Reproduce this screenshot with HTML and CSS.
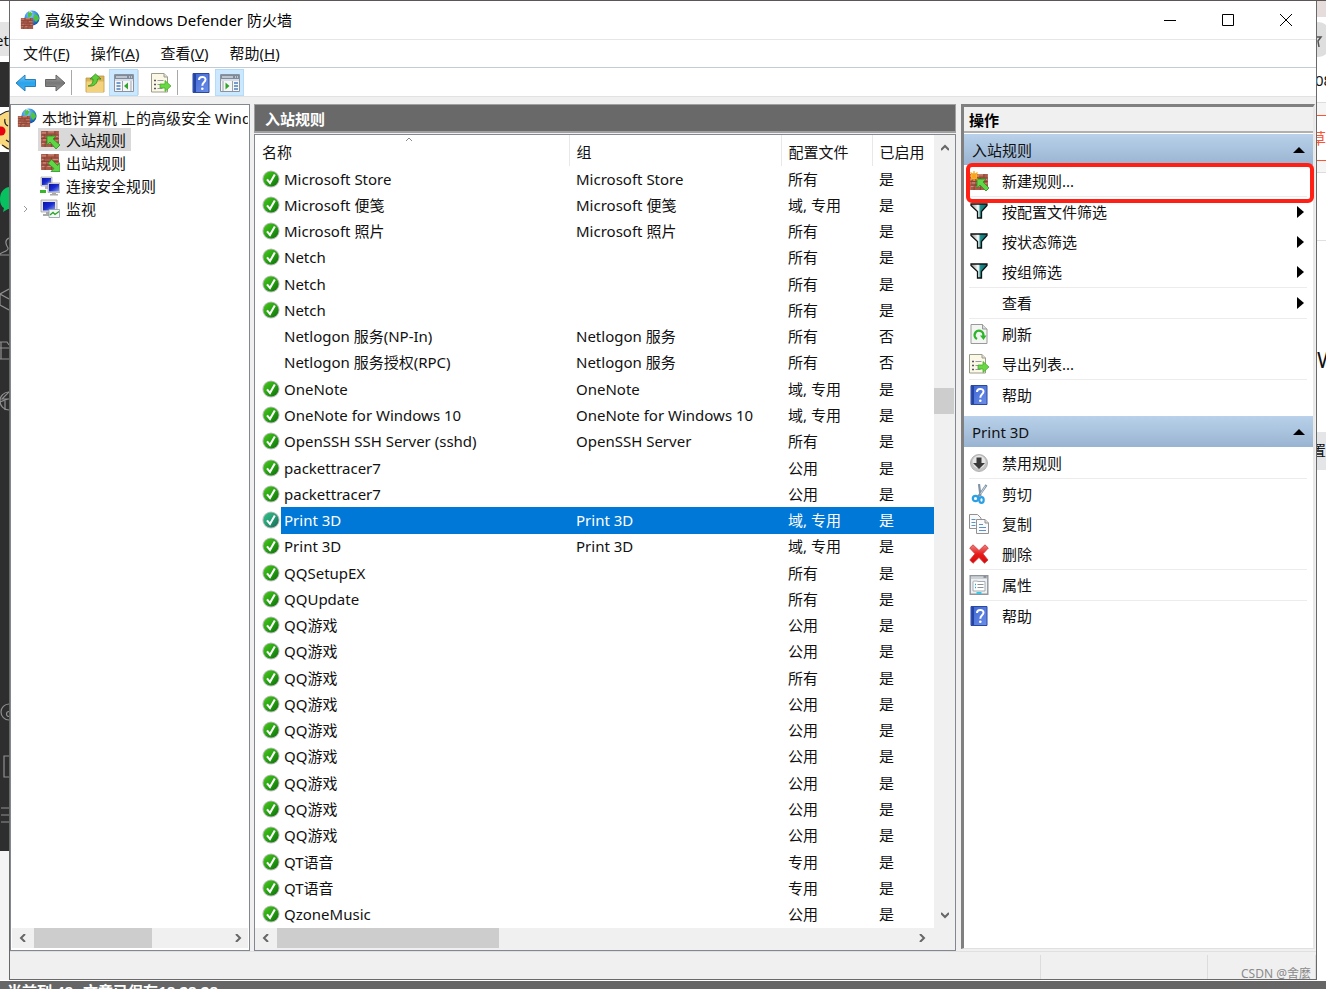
FILE: index.html
```html
<!DOCTYPE html>
<html lang="zh-CN">
<head>
<meta charset="utf-8">
<title>高级安全 Windows Defender 防火墙</title>
<link rel="stylesheet" href="styles.css">
</head>
<body>
<svg class="sprite" width="0" height="0" aria-hidden="true">
  <defs>
    <linearGradient id="g-green" x1="0" y1="0" x2="1" y2="1"><stop offset="0" stop-color="#4cc81c"/><stop offset=".5" stop-color="#26a312"/><stop offset="1" stop-color="#0f6a0a"/></linearGradient>
    <linearGradient id="g-blue" x1="0" y1="0" x2="0" y2="1"><stop offset="0" stop-color="#6fcbf8"/><stop offset=".5" stop-color="#2ba3ec"/><stop offset="1" stop-color="#3fb4f4"/></linearGradient>
    <linearGradient id="g-gray" x1="0" y1="0" x2="0" y2="1"><stop offset="0" stop-color="#a8a8a8"/><stop offset=".5" stop-color="#777"/><stop offset="1" stop-color="#999"/></linearGradient>
    <linearGradient id="g-help" x1="0" y1="0" x2="1" y2="1"><stop offset="0" stop-color="#3f66d4"/><stop offset="1" stop-color="#6a8ee8"/></linearGradient>
    <linearGradient id="g-red" x1="0" y1="0" x2="0" y2="1"><stop offset="0" stop-color="#f08080"/><stop offset=".5" stop-color="#e81c1c"/><stop offset="1" stop-color="#d80808"/></linearGradient>
    <linearGradient id="g-screen" x1="0" y1="0" x2="1" y2="1"><stop offset="0" stop-color="#0a12a8"/><stop offset=".5" stop-color="#1a2cd0"/><stop offset="1" stop-color="#8aa4f4"/></linearGradient>
    <linearGradient id="g-funnel" x1="0" y1="0" x2="1" y2="0"><stop offset="0" stop-color="#888"/><stop offset=".45" stop-color="#fff"/><stop offset=".6" stop-color="#1a8c8c"/><stop offset="1" stop-color="#0b6d70"/></linearGradient>
    <radialGradient id="g-globe" cx=".4" cy=".3" r=".8"><stop offset="0" stop-color="#8fd0ff"/><stop offset=".6" stop-color="#2a7fd4"/><stop offset="1" stop-color="#0e3f9a"/></radialGradient>
  </defs>
  <symbol id="i-check" viewBox="0 0 18 18"><circle cx="9" cy="9" r="8.6" fill="#bdbdbd"/><circle cx="9" cy="9" r="7.6" fill="url(#g-green)"/><path d="M5 9.4 8 13 12.8 4.6" fill="none" stroke="#fff" stroke-width="2.1"/></symbol>
  <symbol id="i-bricks" viewBox="0 0 20 18"><path fill="#ac5a48" d="M0 0h20v18H0z"/><path d="M1 2h5M8 1h7M13 6h6M1 6h3M2 10h6M1 14h4M7 14h5M14 11h5" stroke="#d08c7c" stroke-width="1.4"/><path d="M0 4.500h20M0 8.500h20M0 12.500h20M6.500 0v4M15.500 0v4M3.500 4v4M11.500 4v4M6.500 9v4M14.500 9v4M4.500 13v5M11.500 13v5" stroke="#7c3c30" stroke-width=".9" fill="none"/></symbol>
  <symbol id="i-in" viewBox="0 0 20 18"><use href="#i-bricks" width="20" height="16"/><path d="M7 5h9l-3 3 7 6-4 4-6-7-3 3z" fill="#5fd646" stroke="#2f8f22" stroke-width=".8"/></symbol>
  <symbol id="i-out" viewBox="0 0 20 18"><use href="#i-bricks" width="20" height="16"/><path d="M20 17.500h-9l3-3-6-5 3.500-4 6 6 2.500-3z" fill="#5fd646" stroke="#2f8f22" stroke-width=".8"/></symbol>
  <symbol id="i-new" viewBox="0 0 20 20"><use href="#i-bricks" y="3" width="20" height="16"/><path d="M8 8h9l-3 3 6 6-3 3-6-6-3 3z" fill="#5fd646" stroke="#2f8f22" stroke-width=".8"/><circle cx="5" cy="5" r="3.200" fill="#ffc43a"/><path d="M5 0v10M0 5h10M1.500 1.500l7 7M8.500 1.500l-7 7" stroke="#f7a41c" stroke-width="1.200"/></symbol>
  <symbol id="i-fw" viewBox="0 0 20 20"><circle cx="12" cy="8" r="7.600" fill="url(#g-globe)"/><path d="M8 3c3-3 5 0 4 2s-3 3-4 2zM14 5c3-2 5 2 5 4l-3 3c-2-2-3-4-2-7z" fill="#4ec53c"/><path d="M9 2c2-1 3 0 3 1" stroke="#e8f6ff" fill="none"/><use href="#i-bricks" y="8" width="14" height="11"/></symbol>
  <symbol id="i-pcs" viewBox="0 0 20 20"><path d="M1 1h11v9H1z" fill="#dcdcdc" stroke="#999" stroke-width=".6"/><path d="M2 2h9v7H2z" fill="url(#g-screen)"/><path d="M5 10h4v3H5z" fill="#bbb"/><path d="M0 14h6v3H0z" fill="#39b52a"/><path d="M8 7h12v9.500H8z" fill="#dcdcdc" stroke="#999" stroke-width=".6"/><path d="M9 8h10v7.500H9z" fill="url(#g-screen)"/><path d="M12 17h4v1h2v1.500h-8V18h2z" fill="#aaa"/></symbol>
  <symbol id="i-mon" viewBox="0 0 20 20"><path d="M1 1h16v12H1z" fill="#e4e4e4" stroke="#999" stroke-width=".7"/><path d="M3 3h12v8.500H3z" fill="url(#g-screen)"/><path d="M6 13h5v2h3v2H3v-2h3z" fill="#aaa"/><path d="M9 10.500h10.500v8H9z" fill="#f4f9f4" stroke="#8a9aa8" stroke-width=".8"/><path d="m10 16 3-2.500 2 2 4-3" stroke="#28a428" fill="none" stroke-width="1.300"/></symbol>
  <symbol id="i-back" viewBox="0 0 22 18"><path d="M1 9 10 1v4.500h10.500v7H10V17z" fill="url(#g-blue)" stroke="#2b7fb8"/></symbol>
  <symbol id="i-fwd" viewBox="0 0 22 18"><path d="M21 9 12 1v4.500H1.500v7H12V17z" fill="url(#g-gray)" stroke="#666"/></symbol>
  <symbol id="i-folder" viewBox="0 0 20 20"><path d="M1 5h9l2-2h7v16H1z" fill="#dcb45c" stroke="#bb9440" stroke-width=".8"/><path d="M1.500 8.500h17V19h-17z" fill="#f2d27c"/><path d="M3 13c4-1 5-3 5-7H5l5.500-5L16 6h-3.500c0 4-3 8-9.500 7z" fill="#5fce3a" stroke="#2c8a1c" stroke-width=".8"/></symbol>
  <symbol id="i-paneL" viewBox="0 0 20 18"><path d="M.5.500h19v17H.5z" fill="#f6f6f6" stroke="#8993a0"/><path d="M1 1h18v4H1z" fill="#7d8b9d"/><path d="M2 3h11M15 3h1M17 3h1" stroke="#fff"/><path d="M1 5h18v2H1z" fill="#d6dde6"/><path d="M2.500 9h4M2.500 12h4M2.500 15h4" stroke="#4c7fc0" stroke-width="1.500"/><path d="M8.500 7v10M17 7v10" stroke="#9aa3ae"/><path d="m10 12 4-3.500v7z" fill="#2fa52b"/></symbol>
  <symbol id="i-paneR" viewBox="0 0 20 18"><path d="M.5.500h19v17H.5z" fill="#f6f6f6" stroke="#8993a0"/><path d="M1 1h18v4H1z" fill="#7d8b9d"/><path d="M2 3h11M15 3h1M17 3h1" stroke="#fff"/><path d="M1 5h18v2H1z" fill="#d6dde6"/><path d="M14 9h4M14 12h4M14 15h4" stroke="#4c7fc0" stroke-width="1.500"/><path d="M12.500 7v10M3 7v10" stroke="#9aa3ae"/><path d="m9.500 12-4-3.500v7z" fill="#2fa52b"/></symbol>
  <symbol id="i-export" viewBox="0 0 20 20"><path d="M.500.500H13l3.500 3.500v15H.500z" fill="#fbf8e6" stroke="#9c9c8c"/><path d="M13 .500V4h3.500" fill="#ddd" stroke="#9c9c8c"/><path d="M3 7.500h2M3 11.500h2M3 15.500h2" stroke="#556" stroke-width="1.500"/><path d="M6.500 7.500h6M6.500 11.500h5M6.500 15.500h5" stroke="#99a" stroke-width="1.200"/><path d="M9 11h5V7.500l6 5.500-6 5.500V15H9z" fill="#69d844" stroke="#3da824" stroke-width=".7"/></symbol>
  <symbol id="i-help" viewBox="0 0 17 20"><path d="M.500.500h16v19H.500z" fill="url(#g-help)" stroke="#2b48a0"/><path d="M1 1h2.500v18H1z" fill="#2444a4"/><path d="M6.500 7c0-4 6.500-4 6.500-.5 0 3-3.200 2.500-3.200 6.200" fill="none" stroke="#fff" stroke-width="2"/><circle cx="9.800" cy="15.800" r="1.300" fill="#fff"/></symbol>
  <symbol id="i-filter" viewBox="-1 0 20 18"><path d="M1 1h16v1.500L11.500 8.500V15h-4V8.500L1 2.500z" fill="url(#g-funnel)" stroke="#111" stroke-width="1.300"/></symbol>
  <symbol id="i-refresh" viewBox="0 0 17 20"><path d="M.500.500H12L16.500 5v14.500H.500z" fill="#f3f5f3" stroke="#999"/><path d="M12 .500V5h4.500" fill="#ddd" stroke="#999"/><path d="M6.500 15A4.400 4.400 0 1 1 12.800 12" fill="none" stroke="#2fb52b" stroke-width="2.400"/><path d="M9.500 11.500H16L13 16z" fill="#2fb52b"/></symbol>
  <symbol id="i-disable" viewBox="-1 -1 20 20"><circle cx="9" cy="9" r="8.500" fill="#c4c4c4" stroke="#a6a6a6" stroke-width=".8"/><circle cx="9" cy="8" r="6.500" fill="#e6e6e6"/><path d="M6.500 3.500h5V9h3.500l-6 6-6-6h3.500z" fill="#3a3a3a"/></symbol>
  <symbol id="i-cut" viewBox="0 0 16 20"><path d="m8 0 1.500 12M15.500 1 7 13" stroke="#7f92a6" stroke-width="2.200"/><path d="m14.500 2-5 8" stroke="#dce6ee" stroke-width=".8"/><circle cx="4.500" cy="14.500" r="2.700" fill="none" stroke="#2d9fe4" stroke-width="2.200"/><ellipse cx="10.500" cy="16" rx="2.200" ry="2.800" fill="none" stroke="#2d9fe4" stroke-width="2.200"/></symbol>
  <symbol id="i-copy" viewBox="0 0 20 20"><path d="M.500.500h8L12 4v10.500H.500z" fill="#fafafa" stroke="#929292"/><path d="M2.500 5.500h4M2.500 8.500h4M2.500 11.500h4" stroke="#5b93c8" stroke-width="1.200"/><path d="M7.500 5.500H16L19.500 9v10.500h-12z" fill="#fafafa" stroke="#929292"/><path d="M16 5.500V9h3.500" fill="#ddd" stroke="#929292"/><path d="M10 10.500h4M10 13.500h7M10 16.500h7" stroke="#5b93c8" stroke-width="1.200"/></symbol>
  <symbol id="i-delete" viewBox="0 0 20 20"><path d="M4 .800 10 6.500 16 .800 19.300 4 14 9.800 19 16 15.500 19.300 10 13.500 4 19.300.800 16 6 9.800.700 4z" fill="url(#g-red)" stroke="#c43a3a" stroke-width=".8"/></symbol>
  <symbol id="i-props" viewBox="0 0 19 20"><path d="M.700.700h17.600v18.600H.700z" fill="#eef0f2" stroke="#8e959c" stroke-width="1.400"/><path d="M1 3h17" stroke="#aab2ba"/><path d="M14 2h3" stroke="#556" stroke-width="1"/><path d="M3.500 6.500h12v9.500h-12z" fill="#fff" stroke="#a4abb3"/><path d="M4 5h4v2H4z" fill="#ccd2d8"/><path d="M5.500 9.500h1M5.500 12.500h1" stroke="#2aa4e0" stroke-width="1.500"/><path d="M8 9.500h6M8 12.500h6" stroke="#8a939c"/><path d="M7 17h5v2H7z" fill="#3ac8ea"/></symbol>
</svg>

<div class="desktop">
  <div class="edge-top"></div>
  <div class="edge-left">
    <div class="tab-piece">et</div>
    <div class="dark-a"></div>
    <svg class="avatar" viewBox="0 0 9 45"><path fill="#fff" d="M0 0h9v45H0z"/><path d="M9 4C4 4 2 8 0 9v28c3 2 5 5 9 6z" fill="#f9d77c"/><path d="M9 4C5 4 2 7 0 8M5 12c-1 4 1 6 3 7M2 38c3 1 4 4 7 4M6 33l3 2" fill="none" stroke="#222" stroke-width="1.200"/><circle cx="1" cy="24" r="4.500" fill="#e60012"/></svg>
    <svg class="dock" viewBox="0 0 9 699"><path fill="#2e2e2e" d="M0 0h9v699H0z"/><path d="M9 35C3 36 0 41 0 47c0 5 2 8 4 9l-1 4 5-3h1z" fill="#07c160"/><g fill="none" stroke="#8f8f8f" stroke-width="1.200"><path d="M9 86c-5 2-3 7-1 10 1 3-6 4-8 6M0 103h9M9 137l-9 5v11l9 5M0 142l9 5M0 190h7l2 3M0 196h9M0 207h9M1 190v17"/><circle cx="9" cy="249" r="9"/><path d="M9 240 2 247h7M0 250l8-3M5 258v-9"/><circle cx="9" cy="560" r="8"/><circle cx="9" cy="562" r="2.500"/><path d="M9 604H4v21h5M1 656h8M1 663h8M1 670h8"/></g></svg>
    <div class="pale"></div>
  </div>

  <main class="window">
    <header class="titlebar">
      <svg class="app-icon"><use href="#i-fw"/></svg>
      <h1>高级安全 Windows Defender 防火墙</h1>
      <button class="cap" aria-label="最小化"><svg viewBox="0 0 12 12"><path d="M0 6.500h12"/></svg></button>
      <button class="cap" aria-label="最大化"><svg viewBox="0 0 12 12"><path d="M.500.500h11v11H.500z"/></svg></button>
      <button class="cap" aria-label="关闭"><svg viewBox="0 0 12 12"><path d="m0 0 12 12M12 0 0 12"/></svg></button>
    </header>
    <nav class="menubar">
      <button>文件(<u>F</u>)</button><button>操作(<u>A</u>)</button><button>查看(<u>V</u>)</button><button>帮助(<u>H</u>)</button>
    </nav>
    <div class="toolbar">
      <button aria-label="后退"><svg class="arrow"><use href="#i-back"/></svg></button>
      <button aria-label="前进"><svg class="arrow"><use href="#i-fwd"/></svg></button>
      <i class="sep first"></i>
      <button aria-label="向上"><svg><use href="#i-folder"/></svg></button>
      <button class="on" aria-label="显示控制台树"><svg><use href="#i-paneL"/></svg></button>
      <i class="sep faint"></i>
      <button aria-label="导出列表"><svg><use href="#i-export"/></svg></button>
      <i class="sep last"></i>
      <button aria-label="帮助"><svg><use href="#i-help"/></svg></button>
      <button class="on" aria-label="显示操作窗格"><svg><use href="#i-paneR"/></svg></button>
    </div>

    <div class="panes">
      <section class="tree-pane">
        <ul class="tree">
          <li class="root"><svg><use href="#i-fw"/></svg><span>本地计算机 上的高级安全 Windows Defender 防火墙</span></li>
          <li><i class="exp"></i><span class="node sel"><svg><use href="#i-in"/></svg>入站规则</span></li>
          <li><i class="exp"></i><span class="node"><svg><use href="#i-out"/></svg>出站规则</span></li>
          <li><i class="exp"></i><span class="node"><svg><use href="#i-pcs"/></svg>连接安全规则</span></li>
          <li><i class="exp"><svg viewBox="0 0 6 8"><path d="m1 1 3 3-3 3"/></svg></i><span class="node"><svg><use href="#i-mon"/></svg>监视</span></li>
        </ul>
        <div class="hbar tree-bar">
          <button aria-label="向左"><svg viewBox="0 0 8 8"><path d="M6 0 2 4l4 4"/></svg></button>
          <div class="track"><div class="thumb"></div></div>
          <button aria-label="向右"><svg viewBox="0 0 8 8"><path d="m2 0 4 4-4 4"/></svg></button>
        </div>
      </section>

      <section class="list-pane">
        <h2>入站规则</h2>
        <div class="list-box">
          <div class="list-area">
            <table>
              <colgroup><col class="c-name"><col class="c-group"><col class="c-prof"><col></colgroup>
              <thead><tr><th class="sorted">名称<svg viewBox="0 0 8 5"><path d="m1 4 3-3 3 3"/></svg></th><th>组</th><th>配置文件</th><th>已启用</th></tr></thead>
              <tbody>
                <tr><td><span><svg><use href="#i-check"/></svg>Microsoft Store</span></td><td>Microsoft Store</td><td>所有</td><td>是</td></tr>
                <tr><td><span><svg><use href="#i-check"/></svg>Microsoft 便笺</span></td><td>Microsoft 便笺</td><td>域, 专用</td><td>是</td></tr>
                <tr><td><span><svg><use href="#i-check"/></svg>Microsoft 照片</span></td><td>Microsoft 照片</td><td>所有</td><td>是</td></tr>
                <tr><td><span><svg><use href="#i-check"/></svg>Netch</span></td><td></td><td>所有</td><td>是</td></tr>
                <tr><td><span><svg><use href="#i-check"/></svg>Netch</span></td><td></td><td>所有</td><td>是</td></tr>
                <tr><td><span><svg><use href="#i-check"/></svg>Netch</span></td><td></td><td>所有</td><td>是</td></tr>
                <tr><td><span><svg></svg>Netlogon 服务(NP-In)</span></td><td>Netlogon 服务</td><td>所有</td><td>否</td></tr>
                <tr><td><span><svg></svg>Netlogon 服务授权(RPC)</span></td><td>Netlogon 服务</td><td>所有</td><td>否</td></tr>
                <tr><td><span><svg><use href="#i-check"/></svg>OneNote</span></td><td>OneNote</td><td>域, 专用</td><td>是</td></tr>
                <tr><td><span><svg><use href="#i-check"/></svg>OneNote for Windows 10</span></td><td>OneNote for Windows 10</td><td>域, 专用</td><td>是</td></tr>
                <tr><td><span><svg><use href="#i-check"/></svg>OpenSSH SSH Server (sshd)</span></td><td>OpenSSH Server</td><td>所有</td><td>是</td></tr>
                <tr><td><span><svg><use href="#i-check"/></svg>packettracer7</span></td><td></td><td>公用</td><td>是</td></tr>
                <tr><td><span><svg><use href="#i-check"/></svg>packettracer7</span></td><td></td><td>公用</td><td>是</td></tr>
                <tr class="sel"><td><span><svg><use href="#i-check"/></svg>Print 3D</span></td><td>Print 3D</td><td>域, 专用</td><td>是</td></tr>
                <tr><td><span><svg><use href="#i-check"/></svg>Print 3D</span></td><td>Print 3D</td><td>域, 专用</td><td>是</td></tr>
                <tr><td><span><svg><use href="#i-check"/></svg>QQSetupEX</span></td><td></td><td>所有</td><td>是</td></tr>
                <tr><td><span><svg><use href="#i-check"/></svg>QQUpdate</span></td><td></td><td>所有</td><td>是</td></tr>
                <tr><td><span><svg><use href="#i-check"/></svg>QQ游戏</span></td><td></td><td>公用</td><td>是</td></tr>
                <tr><td><span><svg><use href="#i-check"/></svg>QQ游戏</span></td><td></td><td>公用</td><td>是</td></tr>
                <tr><td><span><svg><use href="#i-check"/></svg>QQ游戏</span></td><td></td><td>所有</td><td>是</td></tr>
                <tr><td><span><svg><use href="#i-check"/></svg>QQ游戏</span></td><td></td><td>公用</td><td>是</td></tr>
                <tr><td><span><svg><use href="#i-check"/></svg>QQ游戏</span></td><td></td><td>公用</td><td>是</td></tr>
                <tr><td><span><svg><use href="#i-check"/></svg>QQ游戏</span></td><td></td><td>公用</td><td>是</td></tr>
                <tr><td><span><svg><use href="#i-check"/></svg>QQ游戏</span></td><td></td><td>公用</td><td>是</td></tr>
                <tr><td><span><svg><use href="#i-check"/></svg>QQ游戏</span></td><td></td><td>公用</td><td>是</td></tr>
                <tr><td><span><svg><use href="#i-check"/></svg>QQ游戏</span></td><td></td><td>公用</td><td>是</td></tr>
                <tr><td><span><svg><use href="#i-check"/></svg>QT语音</span></td><td></td><td>专用</td><td>是</td></tr>
                <tr><td><span><svg><use href="#i-check"/></svg>QT语音</span></td><td></td><td>专用</td><td>是</td></tr>
                <tr><td><span><svg><use href="#i-check"/></svg>QzoneMusic</span></td><td></td><td>公用</td><td>是</td></tr>
              </tbody>
            </table>
            <div class="vbar">
              <button aria-label="向上滚动"><svg viewBox="0 0 8 8"><path d="m0 6 4-4 4 4"/></svg></button>
              <div class="track"><div class="thumb"></div></div>
              <button aria-label="向下滚动"><svg viewBox="0 0 8 8"><path d="m0 2 4 4 4-4"/></svg></button>
            </div>
          </div>
          <div class="hbar list-bar">
            <button aria-label="向左"><svg viewBox="0 0 8 8"><path d="M6 0 2 4l4 4"/></svg></button>
            <div class="track"><div class="thumb"></div></div>
            <button aria-label="向右"><svg viewBox="0 0 8 8"><path d="m2 0 4 4-4 4"/></svg></button>
          </div>
        </div>
      </section>

      <aside class="actions">
        <h2>操作</h2>
        <h3>入站规则<svg viewBox="0 0 12 6"><path d="M6 0l6 6H0z"/></svg></h3>
        <ul>
          <li class="line marked"><button><svg><use href="#i-new"/></svg>新建规则...</button></li>
          <li><button><svg><use href="#i-filter"/></svg>按配置文件筛选<b></b></button></li>
          <li><button><svg><use href="#i-filter"/></svg>按状态筛选<b></b></button></li>
          <li class="line"><button><svg><use href="#i-filter"/></svg>按组筛选<b></b></button></li>
          <li class="line"><button><svg></svg>查看<b></b></button></li>
          <li><button><svg><use href="#i-refresh"/></svg>刷新</button></li>
          <li class="line"><button><svg><use href="#i-export"/></svg>导出列表...</button></li>
          <li><button><svg><use href="#i-help"/></svg>帮助</button></li>
        </ul>
        <h3>Print 3D<svg viewBox="0 0 12 6"><path d="M6 0l6 6H0z"/></svg></h3>
        <ul>
          <li class="line"><button><svg><use href="#i-disable"/></svg>禁用规则</button></li>
          <li><button><svg><use href="#i-cut"/></svg>剪切</button></li>
          <li><button><svg><use href="#i-copy"/></svg>复制</button></li>
          <li class="line"><button><svg><use href="#i-delete"/></svg>删除</button></li>
          <li class="line"><button><svg><use href="#i-props"/></svg>属性</button></li>
          <li><button><svg><use href="#i-help"/></svg>帮助</button></li>
        </ul>
      </aside>
    </div>
    <footer class="status"><span></span><span></span><span></span></footer>
  </main>

  <div class="edge-right">
    <div class="rose"></div>
    <svg class="round" viewBox="0 0 9 44"><path fill="#fff" d="M0 0h9v44H0z"/><path d="M0 5c4 0 7 1 9 3v29c-2 2-5 3-9 3z" fill="#dedede"/><path d="M0 20h4l-3 4 1 6" stroke="#555" fill="none" stroke-width="1.500"/></svg>
    <div class="num">08</div>
    <div class="orange"><span>草</span></div>
    <div class="blank"></div>
    <div class="letter">W</div>
    <div class="chip">置</div>
  </div>
  <div class="edge-bottom"><span>当前列 48</span><span>文章已保存18:28:28</span></div>
  <div class="watermark">CSDN @舍麼</div>
</div>
</body>
</html>
```
FILE: styles.css
```css
* { box-sizing: border-box; }
body { margin: 0; font: 15px/20px "Noto Sans", "Noto Sans CJK SC", sans-serif; color: #111; }
h1, h2, h3, ul { margin: 0; padding: 0; font-weight: 400; list-style: none; }
button { border: 0; padding: 0; background: none; font: inherit; color: inherit; }
.sprite { position: absolute; }

.desktop {
  position: relative;
  display: grid;
  grid-template: 1px minmax(0, 1fr) 9px / 9px minmax(0, 1fr) 9px;
  height: 100vh;
  overflow: hidden;
  background: #fff;
}
.edge-top { grid-column: 1 / -1; background: #5c5654; }
.edge-left, .edge-right { display: flex; flex-direction: column; overflow: hidden; }
.edge-left svg, .edge-right svg { display: block; flex: none; width: 9px; }
.tab-piece { height: 61px; padding-top: 29px; background: linear-gradient(#fff 21px, #e4e4e4 21px 55px, #fff 55px); direction: rtl; }
.dark-a { height: 45px; background: #2e2e2e; }
.avatar { height: 45px; }
.dock { height: 699px; }
.pale { flex: 1; background: #f4f4f4; }
.rose { height: 16px; background: #e6dcdb; }
.round { height: 44px; }
.num { height: 42px; padding-top: 9px; border-bottom: 1px solid #ddd; text-indent: -2px; }
.orange { height: 70px; padding-top: 12px; background: #f5f5f5; border-bottom: 1px solid #ddd; color: #fc5531; }
.orange span { display: block; height: 46px; padding-top: 12px; border: solid #fc5531; border-width: 1px 0; background: #fff; direction: rtl; }
.blank { height: 68px; border-bottom: 1px solid #e0e0e0; }
.letter { height: 191px; padding-top: 108px; font-size: 22px; }
.chip { height: 38px; padding-top: 8px; background: #e4e5e7; direction: rtl; }
.edge-bottom { display: flex; gap: 10px; grid-column: 1 / -1; height: 9px; padding-left: 7px; overflow: hidden; background: #666; border-top: 1px solid #fff; color: #fff; font-weight: 700; }
.watermark { position: absolute; right: 15px; bottom: 7px; font-size: 12px; line-height: 16px; color: #8a8a8a; }

.window { display: flex; flex-direction: column; min-width: 0; border: solid #696969; border-width: 0 1px 1px; background: #f0f0f0; }
.titlebar { display: flex; align-items: center; flex: none; height: 39px; padding: 0 1px 1px 10px; background: #fff; border-bottom: 1px solid #e6e6e6; }
.app-icon { width: 20px; height: 20px; margin-right: 5px; }
.titlebar h1 { flex: 1; font-size: 15px; color: #000; }
.cap { width: 58px; height: 37px; }
.cap svg { display: block; width: 12px; height: 12px; margin: auto; fill: none; stroke: #000; overflow: visible; }
.menubar { display: flex; gap: 21px; flex: none; height: 28px; padding: 0 0 2px 13px; background: #fff; border-bottom: 1px solid #c3ccd3; }
.toolbar { display: flex; align-items: center; flex: none; height: 29px; padding-left: 1px; background: #fff; border-bottom: 1px solid #e2e2e2; }
.toolbar button { width: 29px; height: 27px; padding-top: 2px; }
.toolbar .on { background: #cce8ff; box-shadow: inset 0 0 0 1px #b4dcfa; }
.toolbar svg { display: block; width: 20px; height: 20px; margin: auto; }
.toolbar .arrow { width: 22px; }
.sep { width: 1px; height: 25px; margin-right: 8px; background: #a8a8a8; }
.sep.first { margin-left: 2px; }
.sep.faint { margin-right: 7px; background: #ddd; }
.sep.last { margin-left: 2px; }

.panes { display: grid; grid-template-columns: 240px minmax(0, 1fr) 356px; gap: 4px; flex: 1; min-height: 0; padding-top: 7px; }
.tree-pane { display: flex; flex-direction: column; min-width: 0; background: #fff; border: 1px solid #828790; overflow: hidden; }
.tree { flex: 1; padding: 2px 1px 0 6px; overflow: hidden; }
.tree li { display: flex; align-items: center; height: 23px; white-space: nowrap; }
.tree .root { height: 21px; }
.tree .root svg { flex: none; width: 20px; height: 20px; margin-right: 5px; }
.tree .root span { flex: 1; min-width: 0; overflow: hidden; }
.exp { flex: none; width: 21px; padding-left: 6px; line-height: 0; }
.exp svg { width: 6px; height: 8px; fill: none; stroke: #999; }
.node { display: flex; align-items: center; gap: 6px; height: 23px; padding: 0 5px 0 2px; }
.node svg { width: 20px; height: 20px; }
.node.sel { background: #d9d9d9; }

.hbar { display: flex; flex: none; height: 20px; margin: 0 1px 2px; background: #f0f0f0; }
.hbar button, .vbar button { flex: none; width: 21px; height: 20px; }
.hbar button svg, .vbar button svg { display: block; width: 8px; height: 8px; margin: auto; fill: none; stroke: #666; stroke-width: 2; }
.track { flex: 1; }
.thumb { background: #cdcdcd; }
.hbar .thumb { height: 20px; margin-left: 1px; }
.tree-bar .thumb { width: 61%; }
.list-bar { margin: 0; padding: 0 23px 2px 0; height: 22px; }
.list-bar .thumb { width: 35%; }
.vbar { display: flex; flex-direction: column; width: 21px; background: #f0f0f0; }
.vbar button { height: 26px; }
.vbar .thumb { width: 20px; height: 26px; margin-top: 227px; }

.list-pane { display: flex; flex-direction: column; min-width: 0; }
.list-pane h2 { flex: none; height: 29px; margin-bottom: 1px; padding: 4px 10px; border: 1px solid #a0a0a0; border-bottom-width: 2px; background: #696969; color: #fff; font-size: 15px; font-weight: 700; }
.list-box { display: flex; flex-direction: column; flex: 1; min-height: 0; background: #fff; border: 1px solid #828790; }
.list-area { display: grid; grid-template-columns: minmax(0, 1fr) 21px; flex: 1; min-height: 0; }
table { width: 100%; height: 100%; table-layout: fixed; border-collapse: collapse; }
.c-name { width: 314px; }
.c-group { width: 212px; }
.c-prof { width: 91px; }
th, td { padding: 0 0 0 7px; text-align: left; font-weight: 400; line-height: 20px; white-space: nowrap; }
td { padding-bottom: 1px; }
th { position: relative; height: 31px; padding-top: 2px; border-right: 1px solid #e8e8e8; }
th:last-child { border-right: 0; }
th svg { position: absolute; top: 2px; left: 48%; width: 8px; height: 5px; fill: none; stroke: #888; }
td:first-child span { display: flex; align-items: center; gap: 4px; }
td svg { width: 18px; height: 18px; }
tr.sel { color: #fff; background: linear-gradient(90deg, #fff 26px, #0078d7 26px); }
tr.sel svg { filter: hue-rotate(45deg) saturate(.7); }

.actions { display: flex; flex-direction: column; min-width: 0; margin: 0 1px 2px 1px; background: #fff; border: solid #808080; border-width: 3px 0 0 3px; border-right: 2px solid #e8e8e8; border-bottom: 1px solid #e0e0e0; }
.actions h2 { height: 26px; padding: 3px 5px; background: #f0f0f0; border-bottom: 2px solid #b0b0b0; font-size: 15px; font-weight: 700; color: #000; }
.actions h3 { display: flex; align-items: center; justify-content: space-between; height: 31px; padding: 0 8px; margin-top: 1px; font-size: 15px; background: linear-gradient(#b9d1ea, #99b4d1); }
.actions h3 svg { width: 12px; height: 6px; }
.actions ul { padding: 1px 6px 0 5px; }
.actions ul + h3 { margin-top: 6px; }
.actions li button { display: flex; align-items: center; width: 100%; height: 30px; text-align: left; }
.actions li svg { flex: none; width: 20px; height: 20px; margin-right: 13px; }
.actions .line { border-bottom: 1px solid #ececec; }
.actions b { margin: 0 3px 0 auto; border: solid transparent; border-width: 6px 0 6px 7px; border-left-color: #000; }
.marked { position: relative; }
.marked::after { content: ""; position: absolute; inset: -3px -7px -7px -3px; border: 4px solid #ff1f14; border-radius: 6px; pointer-events: none; }

.status { display: flex; flex: none; height: 28px; justify-content: flex-end; padding-top: 3px; border-top: 1px solid #e0e0e0; }
.status span { border-right: 1px solid #dcdcdc; }
.status span:nth-child(2) { width: 167px; }
.status span:nth-child(3) { width: 108px; }
```
